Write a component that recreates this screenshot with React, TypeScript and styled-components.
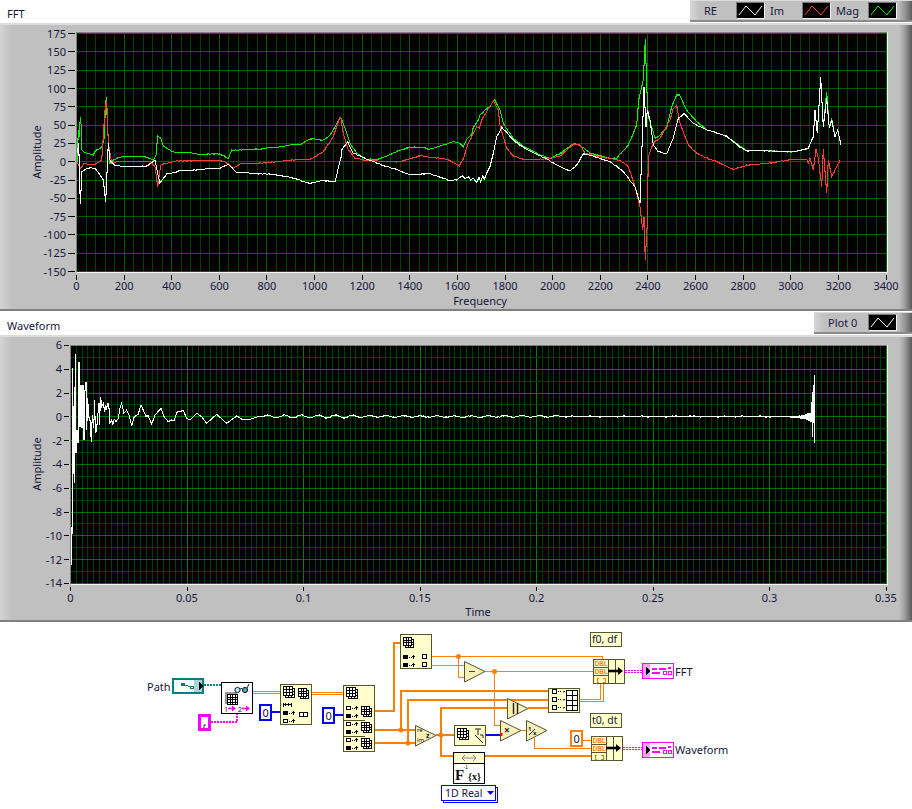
import React from "react";
import styled, { createGlobalStyle } from "styled-components";

const Global = createGlobalStyle`
  html, body { margin: 0; padding: 0; background: #fff; }
`;
const FONT = `"Noto Sans", "Open Sans", sans-serif`;

const Page = styled.div`
  width: 912px; height: 809px; overflow: hidden; background: #fff;
  display: flex; flex-direction: column; font-family: ${FONT}; font-size: 11px; color: #16163a;
`;
const TitleBar = styled.div<{ $h: number }>`
  height: ${(p) => p.$h}px; flex: none; display: flex; justify-content: space-between; align-items: flex-start;
`;
const Title = styled.div<{ $top: number }>`
  padding: ${(p) => p.$top}px 0 0 7px; line-height: 14px;
`;
const Legend = styled.div<{ $w: number; $h: number; $top: number }>`
  width: ${(p) => p.$w}px; height: ${(p) => p.$h}px; margin-top: ${(p) => p.$top}px; box-sizing: border-box;
  display: flex; align-items: center; padding-left: 14px;
  background: linear-gradient(90deg, #d6d6d6 0, #c0c0c0 10px, #c0c0c0 calc(100% - 14px), #8e8e8e calc(100% - 6px), #5c5c5c 100%);
  border-bottom: 2px solid #8a8a8a; border-top: 1px solid #dcdcdc;
`;
const LegendLabel = styled.span<{ $w: number }>`
  width: ${(p) => p.$w}px; flex: none; line-height: 16px;
`;
const SwatchBox = styled.svg`
  width: 29px; height: 17px; flex: none; margin-right: 5px; display: block;
  background: #000; border-right: 1px solid #f2f2f2; border-bottom: 1px solid #f2f2f2;
  border-top: 1px solid #777; border-left: 1px solid #777; box-sizing: border-box;
`;
const Panel = styled.div<{ $h: number }>`
  height: ${(p) => p.$h}px; flex: none; box-sizing: border-box;
  border-top: 2px solid #dcdcdc; border-bottom: 2px solid #808080;
  background: linear-gradient(90deg, #d4d4d4 0, #c6c6c6 8px, #c0c0c0 12px, #c0c0c0 calc(100% - 13px), #a4a4a4 calc(100% - 8px), #5a5a5a 100%);
`;
const ChartSvg = styled.svg`
  display: block; width: 912px; height: 100%;
`;
const AxisText = styled.text`
  font-family: ${FONT}; font-size: 11px; fill: #16163a;
`;
const Diagram = styled.svg`
  display: block; width: 912px; flex: 1;
`;
const Wd = styled.text`
  font-family: ${FONT}; font-size: 11px; fill: #16163a;
`;
const Tiny = styled.text`
  font-family: "Liberation Sans", sans-serif; font-size: 6.5px; font-weight: 700; fill: #ff7f00;
`;

type P = [number, number];
const z = (ox: number, oy: number, a: P[]): P[] => a.map(([x, y]) => [ox + x / 3, oy + y / 3]);
const pts = (a: P[]) => a.map(([x, y]) => `${x.toFixed(1)},${y.toFixed(1)}`).join(" ");
const rough = (a: P[], seed: number, amp = 0.45): P[] => {
  const out: P[] = [];
  a.forEach((p, i) => {
    if (i > 0) {
      const [x0, y0] = a[i - 1];
      const dx = p[0] - x0;
      if (dx > 3) {
        const n = Math.floor(dx / 2);
        for (let k = 1; k < n; k++) {
          const x = x0 + (dx * k) / n;
          const y = y0 + ((p[1] - y0) * k) / n;
          out.push([x, y + Math.sin(x * 2.3 + seed) * Math.sin(x * 0.71 + seed * 2) * amp * 1.6]);
        }
      }
    }
    out.push(p);
  });
  return out;
};

const green: P[] = rough([
  ...z(60, 60, [[52, 305], [55, 210], [58, 230], [61, 172], [64, 200], [66, 270], [75, 278], [100, 285], [105, 275], [125, 262], [133, 235], [136, 150], [139, 112], [143, 210], [146, 250], [150, 310], [160, 300], [185, 290], [250, 290], [280, 300], [288, 285], [293, 227], [302, 235], [310, 258], [340, 275], [400, 280], [420, 284], [480, 282], [505, 296], [515, 270], [600, 268], [660, 260], [700, 254], [720, 255], [750, 237], [790, 240], [810, 225], [828, 195]]),
  ...z(300, 70, [[122, 142], [135, 175], [150, 220], [170, 250], [200, 268], [230, 270], [260, 258], [300, 242], [330, 232], [370, 233], [390, 237], [420, 228], [460, 214], [480, 220], [490, 230], [500, 208], [515, 195], [520, 172], [535, 150], [540, 135], [555, 120], [570, 110], [583, 88], [600, 120], [610, 160], [640, 205], [680, 235], [720, 255], [750, 267], [780, 250]]),
  ...z(560, 30, [[0, 372], [40, 342], [60, 345], [90, 370], [150, 385], [170, 385], [205, 345], [230, 285], [236, 210], [243, 180], [250, 150], [256, 28], [260, 170], [265, 262], [275, 290], [285, 325], [295, 320], [320, 295], [335, 230], [350, 195], [358, 195], [380, 240], [410, 275], [440, 300], [500, 318], [530, 340], [560, 362], [620, 362], [700, 365], [745, 355], [760, 320], [765, 240], [772, 310], [782, 142], [790, 290], [800, 185], [808, 295], [815, 265], [825, 320], [833, 300], [843, 345]]),
], 1);
const red: P[] = rough([
  ...z(60, 60, [[50, 305], [62, 325], [72, 310], [100, 315], [125, 300], [135, 150], [140, 120], [145, 250], [155, 310], [170, 305], [270, 305], [285, 320], [293, 380], [302, 315], [350, 302], [480, 300], [505, 310], [520, 325], [540, 312], [660, 305], [720, 298], [750, 298], [790, 275], [820, 230], [838, 175]]),
  ...z(300, 70, [[122, 142], [130, 190], [145, 240], [165, 265], [200, 270], [240, 275], [300, 275], [330, 265], [360, 258], [390, 262], [440, 268], [478, 288], [490, 268], [505, 220], [520, 190], [530, 170], [538, 175], [545, 150], [560, 125], [580, 92], [595, 120], [600, 165], [620, 235], [640, 258], [670, 268], [740, 268], [770, 260]]),
  ...z(560, 30, [[0, 378], [40, 342], [60, 345], [75, 370], [120, 380], [180, 392], [205, 410], [225, 470], [240, 530], [248, 600], [252, 560], [256, 690], [262, 580], [265, 380], [280, 340], [300, 325], [330, 270], [340, 235], [350, 228], [360, 280], [385, 345], [410, 370], [470, 395], [520, 418], [560, 405], [640, 397], [690, 388], [740, 388], [745, 400], [750, 385], [760, 420], [768, 358], [775, 385], [785, 470], [790, 358], [800, 490], [805, 390], [815, 440], [830, 410], [840, 392]]),
], 2);
const white: P[] = rough([
  ...z(60, 60, [[52, 280], [56, 250], [61, 432], [66, 335], [80, 325], [105, 325], [130, 360], [137, 425], [145, 250], [150, 300], [165, 316], [210, 320], [260, 318], [285, 300], [293, 340], [300, 370], [320, 342], [360, 332], [480, 325], [505, 313], [530, 338], [590, 340], [650, 345], [700, 355], [750, 372], [790, 360], [825, 366], [845, 285]]),
  ...z(300, 70, [[125, 240], [143, 216], [160, 250], [200, 268], [250, 287], [290, 298], [330, 315], [385, 310], [420, 322], [450, 333], [470, 330], [480, 322], [487, 318], [495, 326], [505, 320], [512, 330], [520, 325], [530, 337], [537, 322], [542, 335], [548, 318], [553, 328], [560, 310], [570, 290], [580, 250], [590, 200], [605, 172], [640, 210], [680, 238], [740, 266], [780, 290]]),
  ...z(560, 30, [[0, 410], [30, 422], [50, 405], [70, 372], [100, 378], [150, 395], [190, 425], [225, 470], [240, 520], [246, 350], [252, 170], [258, 290], [262, 240], [270, 270], [280, 345], [295, 365], [320, 372], [340, 325], [355, 265], [372, 250], [400, 280], [440, 300], [500, 318], [540, 352], [560, 363], [620, 362], [700, 365], [745, 355], [760, 320], [765, 240], [772, 310], [782, 142], [790, 290], [800, 205], [808, 295], [815, 270], [825, 320], [833, 300], [843, 345]]),
], 3);

const wave: P[] = (() => {
  const a: P[] = [[71.7, 565]];
  a.push(...z(60, 340, [[37, 480], [38, 85], [40, 320], [43, 430], [46, 42], [48, 340], [51, 270], [54, 310], [57, 66], [60, 260], [63, 135], [66, 265], [69, 135], [72, 300], [75, 150], [78, 125], [80, 270], [83, 175], [86, 230], [90, 240], [94, 305], [97, 225], [101, 265], [104, 180], [106, 280], [110, 270], [112, 240], [117, 190], [118, 255], [122, 172], [125, 200], [130, 190], [134, 215], [137, 195], [140, 205], [144, 188], [147, 205], [150, 250], [155, 240], [158, 255], [163, 238], [168, 245], [175, 235], [180, 205], [185, 190], [192, 220], [200, 210], [207, 225], [215, 258], [222, 232], [235, 222], [243, 195], [250, 210], [257, 228], [265, 228], [275, 252], [285, 225], [303, 205], [312, 230], [325, 245], [335, 240], [342, 243], [352, 215], [370, 212], [380, 235], [390, 240]]));
  a.push(...z(0, 310, [[590, 310], [605, 320], [620, 340], [650, 313], [680, 340], [710, 318], [730, 330], [750, 328], [780, 318]]));
  for (let x = 262; x < 790; x += 2) {
    const amp = x < 360 ? 1.5 : x < 560 ? 0.8 : 0.35;
    const n = Math.sin(x * 1.7) * 0.45 + Math.sin(x * 0.37) * amp;
    a.push([x, 416.5 + n]);
  }
  for (let x = 790; x < 812; x += 1) {
    const grow = x < 804 ? 0.6 + (x - 790) * 0.08 : 1.8 + (x - 804) * 0.5;
    const d = (x % 2 ? 1 : -1) * grow * (0.6 + 0.4 * Math.abs(Math.sin(x * 3.1)));
    a.push([x, 417 + d]);
  }
  a.push([812.6, 391.7], [812.6, 436.7], [814.3, 375], [814.3, 443]);
  return a;
})();

const range = (from: number, to: number, step: number) => {
  const r: number[] = [];
  for (let v = from; v <= to + 1e-6; v += step) r.push(v);
  return r;
};

const Swatch = ({ c }: { c: string }) => (
  <SwatchBox viewBox="0 0 27 15">
    <polyline points="2,12 9,3 18,12 25,3" fill="none" stroke={c} strokeWidth="1" />
  </SwatchBox>
);

const FftChart = () => {
  const L = 76.5, R = 887, T = 32, B = 272;
  const xOf = (v: number) => L + (v / 3400) * 809.5;
  const yOf = (v: number) => 161.7 - (v / 25) * 18.3;
  return (
    <ChartSvg viewBox="0 25 912 284">
      <rect x={L} y={T} width={R - L} height={B - T} fill="#000" />
      <g shapeRendering="crispEdges">
        {range(0, 3400, 40).map((v) => (
          <line key={v} x1={xOf(v)} x2={xOf(v)} y1={T} y2={B} stroke={v % 200 === 0 ? "#006400" : "#004000"} />
        ))}
        {range(-150, 175, 25).map((v) => (
          <line key={v} x1={L} x2={R} y1={yOf(v)} y2={yOf(v)} stroke="#005800" />
        ))}
        <path d={`M${L} ${B}V${T}H${R}`} fill="none" stroke="#808080" />
        <path d={`M${L} ${B}H${R}V${T}`} fill="none" stroke="#f4f4f4" />
        {range(-150, 175, 25).map((v) => (
          <line key={v} x1={68} x2={75} y1={yOf(v)} y2={yOf(v)} stroke="#000" />
        ))}
        {range(0, 3400, 200).map((v) => (
          <line key={v} x1={xOf(v)} x2={xOf(v)} y1={B + 3} y2={B + 8} stroke="#000" />
        ))}
      </g>
      <g fill="none" strokeWidth="1.05" shapeRendering="crispEdges">
        <polyline points={pts(green)} stroke="#12f000" />
        <polyline points={pts(red)} stroke="#ff3c3c" />
        <polyline points={pts(white)} stroke="#fff" />
      </g>
      {range(-150, 175, 25).map((v) => (
        <AxisText key={v} x={66} y={yOf(v) + 4} textAnchor="end">{v}</AxisText>
      ))}
      {range(0, 3400, 200).map((v) => (
        <AxisText key={v} x={xOf(v)} y={290} textAnchor="middle">{v}</AxisText>
      ))}
      <AxisText x={480} y={305} textAnchor="middle">Frequency</AxisText>
      <AxisText transform="translate(41 152) rotate(-90)" textAnchor="middle">Amplitude</AxisText>
    </ChartSvg>
  );
};

const WaveChart = () => {
  const L = 70.5, R = 887, T = 345, B = 584;
  const xOf = (v: number) => L + (v / 0.35) * 815.5;
  const yOf = (v: number) => 416.8 - v * 11.9;
  const xs = range(0, 140, 1);
  return (
    <ChartSvg viewBox="0 337 912 283">
      <rect x={L} y={T} width={R - L} height={B - T} fill="#000" />
      <g shapeRendering="crispEdges">
        {xs.map((i) => (
          <line key={i} x1={xOf(i * 0.0025)} x2={xOf(i * 0.0025)} y1={T} y2={B} stroke={i % 20 === 0 ? "#008000" : "#004000"} />
        ))}
        {range(-14, 6, 1).map((v) => (
          <line key={v} x1={L} x2={R} y1={yOf(v)} y2={yOf(v)} stroke={v % 2 === 0 ? "#007000" : "#004000"} />
        ))}
        <path d={`M${L} ${B}V${T}H${R}`} fill="none" stroke="#808080" />
        <path d={`M${L} ${B}H${R}V${T}`} fill="none" stroke="#f4f4f4" />
        {range(-14, 6, 2).map((v) => (
          <line key={v} x1={64} x2={69} y1={yOf(v)} y2={yOf(v)} stroke="#000" />
        ))}
        {range(0, 7, 1).map((i) => (
          <line key={i} x1={xOf(i * 0.05)} x2={xOf(i * 0.05)} y1={B + 3} y2={B + 7} stroke="#000" />
        ))}
      </g>
      <polyline points={pts(wave)} fill="none" stroke="#fff" strokeWidth="1.05" shapeRendering="crispEdges" />
      {range(-14, 6, 2).map((v) => (
        <AxisText key={v} x={62} y={yOf(v) + 4} textAnchor="end">{v}</AxisText>
      ))}
      {["0", "0.05", "0.1", "0.15", "0.2", "0.25", "0.3", "0.35"].map((t, i) => (
        <AxisText key={t} x={xOf(i * 0.05)} y={602} textAnchor="middle">{t}</AxisText>
      ))}
      <AxisText x={478} y={616} textAnchor="middle">Time</AxisText>
      <AxisText transform="translate(41 464) rotate(-90)" textAnchor="middle">Amplitude</AxisText>
    </ChartSvg>
  );
};

const OR = "#ff8000";
const CREAM = "#ffffcc";
const EDGE = "#55552e";

const Block = ({ x, y, w, h }: { x: number; y: number; w: number; h: number }) => (
  <rect x={x + 0.5} y={y + 0.5} width={w} height={h} fill={CREAM} stroke={EDGE} strokeWidth="1" shapeRendering="crispEdges" />
);
const Tri = ({ x, y, w = 21, h = 21, children }: { x: number; y: number; w?: number; h?: number; children?: React.ReactNode }) => (
  <g>
    <polygon points={`${x + 0.5},${y + 0.5} ${x + w},${y + h / 2} ${x + 0.5},${y + h}`} fill="#f6efb6" stroke={EDGE} />
    {children}
  </g>
);
const Grid = ({ x, y, w, h, nx = 3, ny = 3 }: { x: number; y: number; w: number; h: number; nx?: number; ny?: number }) => (
  <g shapeRendering="crispEdges">
    <rect x={x + 0.5} y={y + 0.5} width={w} height={h} fill="#fff" stroke="#000" />
    {range(1, nx - 1, 1).map((i) => <line key={i} x1={x + 0.5 + (i * w) / nx} x2={x + 0.5 + (i * w) / nx} y1={y} y2={y + h} stroke="#000" />)}
    {range(1, ny - 1, 1).map((i) => <line key={i} x1={x} x2={x + w} y1={y + 0.5 + (i * h) / ny} y2={y + 0.5 + (i * h) / ny} stroke="#000" />)}
  </g>
);
const Arr = ({ x, y, s = 8 }: { x: number; y: number; s?: number }) => (
  <g>
    <Grid x={x + 2} y={y + 2} w={s} h={s} />
    <Grid x={x} y={y} w={s} h={s} />
  </g>
);
const Row = ({ x, y, filled }: { x: number; y: number; filled?: boolean }) => (
  <g shapeRendering="crispEdges">
    <rect x={x + 0.5} y={y - 1.5} width={4} height={3} fill={filled ? "#000" : "#fff"} stroke="#000" />
    <path d={`M${x + 6} ${y}h1M${x + 8} ${y}h1M${x + 10} ${y - 2}v4M${x + 9} ${y - 1}h3`} stroke="#000" fill="none" />
  </g>
);
const Box = ({ x, y }: { x: number; y: number }) => (
  <rect x={x + 0.5} y={y + 0.5} width={4} height={4} fill="#fff" stroke="#000" shapeRendering="crispEdges" />
);
const Bundle = ({ x, y }: { x: number; y: number }) => (
  <g>
    <rect x={x + 0.5} y={y + 0.5} width={31} height={24} fill={CREAM} stroke={EDGE} shapeRendering="crispEdges" />
    <path d={`M${x + 15.5} ${y}v25M${x + 22.5} ${y}v25M${x} ${y + 8.5}h15M${x} ${y + 16.5}h15`} stroke={EDGE} shapeRendering="crispEdges" />
    <Tiny x={x + 1.5} y={y + 7}>DBL</Tiny>
    <Tiny x={x + 1.5} y={y + 15}>DBL</Tiny>
    <path d={`M${x + 6} ${y + 19}h-2v4h2M${x + 10} ${y + 19}h2v4h-2`} stroke={OR} fill="none" shapeRendering="crispEdges" />
    <path d={`M${x + 15} ${y + 12}h13`} stroke="#000" strokeWidth="2.6" />
    <polygon points={`${x + 25},${y + 8} ${x + 30},${y + 12} ${x + 25},${y + 16}`} fill="#000" />
  </g>
);
const Wfm = ({ x, y }: { x: number; y: number }) => (
  <g shapeRendering="crispEdges">
    <rect x={x + 0.5} y={y + 0.5} width={31} height={15} fill="#fff" stroke="#ff00ff" />
    <rect x={x + 1} y={y + 1} width={7} height={14} fill="#f7a3f7" />
    <polygon points={`${x + 4},${y + 4} ${x + 8},${y + 8} ${x + 4},${y + 12}`} fill="#000" />
    <path d={`M${x + 10} ${y + 6}h5M${x + 17} ${y + 6}h7M${x + 10} ${y + 10}h8`} stroke="#ff00ff" strokeWidth="2" />
    <rect x={x + 21} y={y + 8} width={3} height={3} fill="#fff" stroke="#ff00ff" />
    <rect x={x + 26} y={y + 8} width={3} height={3} fill="#fff" stroke="#ff00ff" />
    <rect x={x + 26} y={y + 4} width={3} height={2} fill="#ff00ff" />
  </g>
);

const BlockDiagram = () => (
  <Diagram viewBox="0 622 912 187">
    <g fill="none" stroke={OR} strokeWidth="1" shapeRendering="crispEdges">
      <path d="M253 691.5h27M253 693.5h27M312 692.5h31M312 694.5h31" />
      <path d="M432 656.5h170v4M432 665.5h32M458.5 656v21h6M485 671.5h108M494.5 671v54h6" />
      <path d="M580 699.5h20.5v-17M580 701.5h23.5v-19" />
      <path d="M521 730.5h6M534.5 738v10.5h57M583 740.5h8" />
    </g>
    <g fill="none" stroke={OR} strokeWidth="2" shapeRendering="crispEdges">
      <path d="M375 711h19V643h6" />
      <path d="M375 730h40M401 730V691h147" />
      <path d="M375 743h40M408 743V700h140" />
      <path d="M436 735h18M441 735V708h66M441 735V756h150M528 708h20" />
    </g>
    <circle cx="401" cy="730" r="2.5" fill={OR} />
    <circle cx="408" cy="743" r="2.5" fill={OR} />
    <circle cx="441" cy="735" r="2.5" fill={OR} />
    <circle cx="458.5" cy="656.5" r="2.5" fill={OR} />
    <circle cx="494.5" cy="671.5" r="2.5" fill={OR} />
    <g fill="none" stroke="#0000ff" strokeWidth="1.2" shapeRendering="crispEdges">
      <path d="M272 712h8M335 715h8M486 735h15" />
    </g>
    <path d="M204 685h17" stroke="#008080" strokeWidth="2" strokeDasharray="2 1" fill="none" />
    <path d="M211 722h26v-8" stroke="#ff00ff" strokeWidth="2" strokeDasharray="2 1" fill="none" />
    <path d="M625 670h17M625 672h17M623 747h19M623 749h19" stroke="#ff00ff" strokeWidth="1" strokeDasharray="2 1" fill="none" shapeRendering="crispEdges" />

    <Wd x={147} y={691}>Path</Wd>
    <g shapeRendering="crispEdges">
      <rect x="173" y="679" width="30" height="14" fill="#fff" stroke="#008080" strokeWidth="2" />
      <rect x="194" y="680" width="8" height="12" fill="#a8d4d4" />
      <polygon points="199,682 203,686 199,690" fill="#000" />
      <path d="M182 684l9 3M181 683h3v2h-3zM190 686h3v2h-3z" stroke="#008080" fill="#fff" />
    </g>

    <rect x="221.5" y="682.5" width="31" height="31" fill="#fff" stroke="#000" shapeRendering="crispEdges" />
    <rect x="225" y="692" width="12" height="12" fill="#9a9a9a" />
    <Grid x={227} y={694} w={10} h={10} nx={4} ny={4} />
    <circle cx="237.5" cy="690" r="2.6" fill="#bfeaf0" stroke="#000" strokeWidth=".9" />
    <circle cx="245" cy="690" r="2.6" fill="#29b6c6" stroke="#000" strokeWidth=".9" />
    <path d="M240 689l2-.5M247 688l2-4" stroke="#000" fill="none" strokeWidth=".9" />
    <Wd x={224} y={712} style={{ fontSize: 7 }}>1</Wd>
    <Wd x={238} y={712} style={{ fontSize: 7 }}>2</Wd>
    <path d="M228 708.5h5M242 708.5h5" stroke="#ff00ff" strokeWidth="1.4" />
    <polygon points="232,705.5 236,708.5 232,711.5" fill="#ff00ff" />
    <polygon points="246,705.5 250,708.5 246,711.5" fill="#ff00ff" />

    <rect x="199.5" y="715.5" width="10" height="14" fill="#fff" stroke="#ff00ff" strokeWidth="3" shapeRendering="crispEdges" />
    <path d="M204 728v-3h2" fill="none" stroke="#333" />

    <rect x="260" y="705" width="11" height="15" fill="#fff" stroke="#0000ff" strokeWidth="2.4" shapeRendering="crispEdges" />
    <Wd x={262.5} y={716.5}>0</Wd>
    <Block x={280} y={684} w={31} h={40} />
    <Arr x={283} y={686} s={9} />
    <Arr x={298} y={688} s={8} />
    <path d="M283 704.5h8M283 702.5v4M291 702.5v4M285.5 703v3M288.5 703v3" stroke="#000" shapeRendering="crispEdges" fill="none" />
    <Row x={283} y={713} filled />
    <Row x={283} y={721} />
    <rect x="299.5" y="712.5" width="8" height="4" fill="#fff" stroke="#000" shapeRendering="crispEdges" />
    <line x1="303.5" x2="303.5" y1="712" y2="717" stroke="#000" shapeRendering="crispEdges" />

    <rect x="323" y="708" width="11" height="15" fill="#fff" stroke="#0000ff" strokeWidth="2.4" shapeRendering="crispEdges" />
    <Wd x={325.5} y={719.5}>0</Wd>
    <Block x={343} y={685} w={31} h={66} />
    <path d="M343 720.5h22M343 736.5h22" stroke={EDGE} shapeRendering="crispEdges" />
    <Arr x={346} y={687} s={9} />
    <Row x={346} y={708} />
    <Row x={346} y={716} filled />
    <Arr x={361} y={706} />
    <Row x={346} y={724} />
    <Row x={346} y={732} filled />
    <Arr x={361} y={722} />
    <Row x={346} y={740} />
    <Row x={346} y={748} filled />
    <Arr x={361} y={738} />

    <Block x={400} y={634} w={31} h={34} />
    <Arr x={403} y={637} s={8} />
    <Row x={403} y={657} filled />
    <Row x={403} y={665} filled />
    <Box x={422} y={654} />
    <Box x={422} y={662} />

    <Tri x={415} y={725}>
      <Wd x={417} y={732} style={{ fontSize: 6 }}>re</Wd>
      <Wd x={417} y={742} style={{ fontSize: 6 }}>im</Wd>
      <Wd x={426} y={738} style={{ fontSize: 7, fontWeight: 700 }}>z</Wd>
    </Tri>

    <Tri x={464} y={661}><path d="M469 671.5h6" stroke="#444" /></Tri>
    <Tri x={507} y={698}><path d="M513.5 703v11M517.5 703v11" stroke="#222" strokeWidth="1.4" /></Tri>
    <Tri x={500} y={720}><Wd x={504} y={734} style={{ fontWeight: 700, fontSize: 10 }}>×</Wd></Tri>
    <rect x="500" y="733" width="2.5" height="3" fill="#f00" />
    <Tri x={526} y={720}><Wd x={528} y={731} style={{ fontSize: 6, fontWeight: 700 }}>1</Wd><path d="M529 735l6-6" stroke="#222" /><Wd x={533} y={735} style={{ fontSize: 6, fontWeight: 700 }}>x</Wd></Tri>

    <Block x={454} y={725} w={31} h={20} />
    <Arr x={457} y={728} s={9} />
    <path d="M475 729h6M478 729v6M475 735l8 8M480 735h3v3" stroke="#222" fill="none" />

    <Block x={548} y={688} w={31} h={24} />
    <Box x={552} y={689} />
    <Box x={552} y={697} />
    <Box x={552} y={705} />
    <path d="M558 691.5h4M558 699.5h4M558 707.5h4" stroke="#000" strokeDasharray="1 1" />
    <path d="M563 692l2-.5M563 700l2-.5M563 708l2-.5" stroke="#000" />
    <Grid x={566} y={690} w={11} h={20} nx={2} ny={4} />

    <Block x={590} y={632} w={31} h={14} />
    <Wd x={592} y={643} style={{ fontSize: 10.5 }}>f0, df</Wd>
    <Block x={590} y={713} w={31} h={14} />
    <Wd x={592} y={724} style={{ fontSize: 10.5 }}>t0, dt</Wd>

    <Bundle x={593} y={659} />
    <Bundle x={591} y={736} />
    <rect x="571" y="731" width="11" height="15" fill="#fff" stroke={OR} strokeWidth="2.4" shapeRendering="crispEdges" />
    <Wd x={573.5} y={742.5}>0</Wd>

    <Wfm x={642} y={663} />
    <Wfm x={642} y={742} />
    <Wd x={675} y={676}>FFT</Wd>
    <Wd x={675} y={754}>Waveform</Wd>

    <rect x="453.5" y="752.5" width="31" height="31" fill="#fff" stroke="#000" shapeRendering="crispEdges" />
    <rect x="454" y="753" width="30" height="10" fill={CREAM} />
    <line x1="453" x2="485" y1="763.5" y2="763.5" stroke="#000" shapeRendering="crispEdges" />
    <path d="M462 758h14M465 755l-3 3 3 3M473 755l3 3-3 3" fill="none" stroke="#888" />
    <text x="455" y="780" fontFamily="Liberation Serif, serif" fontWeight="700" fontSize="15" fill="#111">F</text>
    <text x="463.5" y="769" fontFamily="Liberation Sans, sans-serif" fontSize="5" fill="#111">-1</text>
    <text x="468" y="780" fontFamily="Liberation Serif, serif" fontWeight="700" fontSize="10" fill="#111">{"{x}"}</text>

    <rect x="443.5" y="787.5" width="54" height="15" fill="#fff" stroke="#0000ff" shapeRendering="crispEdges" />
    <rect x="441.5" y="785.5" width="54" height="15" fill="#fff" stroke="#0000ff" shapeRendering="crispEdges" />
    <Wd x={445} y={797} style={{ fontSize: 10.5 }}>1D Real</Wd>
    <polygon points="487,791 494,791 490.5,795" fill="#0000ff" />
  </Diagram>
);

export default function App() {
  return (
    <Page>
      <Global />
      <TitleBar $h={23}>
        <Title $top={7}>FFT</Title>
        <Legend $w={222} $h={22} $top={0}>
          <LegendLabel $w={32}>RE</LegendLabel><Swatch c="#fff" />
          <LegendLabel $w={32}>Im</LegendLabel><Swatch c="#ff3c3c" />
          <LegendLabel $w={32}>Mag</LegendLabel><Swatch c="#12f000" />
        </Legend>
      </TitleBar>
      <Panel $h={288}><FftChart /></Panel>
      <TitleBar $h={24}>
        <Title $top={8}>Waveform</Title>
        <Legend $w={98} $h={22} $top={1}>
          <LegendLabel $w={40}>Plot 0</LegendLabel><Swatch c="#fff" />
        </Legend>
      </TitleBar>
      <Panel $h={287}><WaveChart /></Panel>
      <BlockDiagram />
    </Page>
  );
}
